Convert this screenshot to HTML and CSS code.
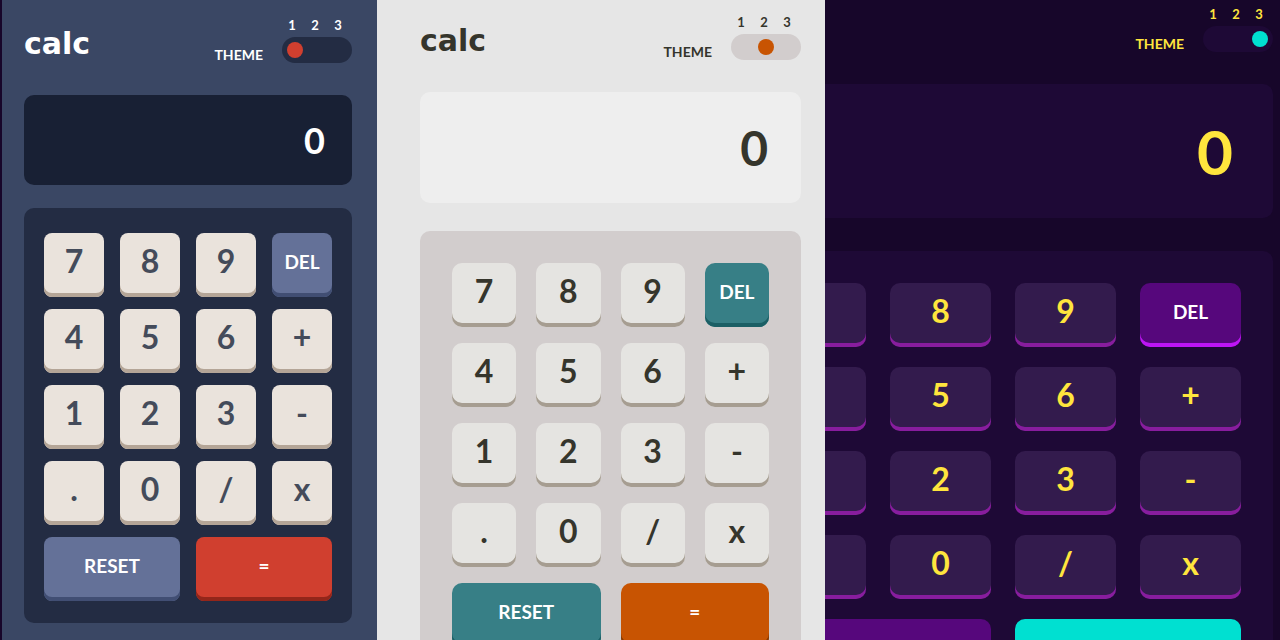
FILE: index.html
```html
<!DOCTYPE html>
<html lang="en">
<head>
<meta charset="utf-8">
<title>calc</title>
<link rel="stylesheet" href="styles.css">
</head>
<body>
<section class="panel t1">
  <div class="calc">
    <header class="head">
      <h1 class="logo">calc</h1>
      <div class="switch">
        <span class="switch-label">THEME</span>
        <div class="switch-ctl">
          <div class="nums"><span>1</span><span>2</span><span>3</span></div>
          <div class="track"><span class="knob"></span></div>
        </div>
      </div>
    </header>
    <div class="screen">0</div>
    <div class="keypad">
      <button class="key">7</button><button class="key">8</button><button class="key">9</button><button class="key fn sm">DEL</button>
      <button class="key">4</button><button class="key">5</button><button class="key">6</button><button class="key">+</button>
      <button class="key">1</button><button class="key">2</button><button class="key">3</button><button class="key">-</button>
      <button class="key">.</button><button class="key">0</button><button class="key">/</button><button class="key">x</button>
      <button class="key fn sm wide">RESET</button><button class="key eq sm wide">=</button>
    </div>
  </div>
</section>
<section class="panel t2">
  <div class="calc">
    <header class="head">
      <h1 class="logo">calc</h1>
      <div class="switch">
        <span class="switch-label">THEME</span>
        <div class="switch-ctl">
          <div class="nums"><span>1</span><span>2</span><span>3</span></div>
          <div class="track"><span class="knob"></span></div>
        </div>
      </div>
    </header>
    <div class="screen">0</div>
    <div class="keypad">
      <button class="key">7</button><button class="key">8</button><button class="key">9</button><button class="key fn sm">DEL</button>
      <button class="key">4</button><button class="key">5</button><button class="key">6</button><button class="key">+</button>
      <button class="key">1</button><button class="key">2</button><button class="key">3</button><button class="key">-</button>
      <button class="key">.</button><button class="key">0</button><button class="key">/</button><button class="key">x</button>
      <button class="key fn sm wide">RESET</button><button class="key eq sm wide">=</button>
    </div>
  </div>
</section>
<section class="panel t3">
  <div class="calc">
    <header class="head">
      <h1 class="logo">calc</h1>
      <div class="switch">
        <span class="switch-label">THEME</span>
        <div class="switch-ctl">
          <div class="nums"><span>1</span><span>2</span><span>3</span></div>
          <div class="track"><span class="knob"></span></div>
        </div>
      </div>
    </header>
    <div class="screen">0</div>
    <div class="keypad">
      <button class="key">7</button><button class="key">8</button><button class="key">9</button><button class="key fn sm">DEL</button>
      <button class="key">4</button><button class="key">5</button><button class="key">6</button><button class="key">+</button>
      <button class="key">1</button><button class="key">2</button><button class="key">3</button><button class="key">-</button>
      <button class="key">.</button><button class="key">0</button><button class="key">/</button><button class="key">x</button>
      <button class="key fn sm wide">RESET</button><button class="key eq sm wide">=</button>
    </div>
  </div>
</section>
</body>
</html>
```
FILE: styles.css
```css
* { box-sizing: border-box; margin: 0; padding: 0; }
html, body { width: 1280px; height: 640px; overflow: hidden; }
body {
  background: #17062a;
  font-family: "Lato", "Liberation Sans", sans-serif;
  font-weight: 700;
  display: flex;
  padding-left: 2px;
}
.panel { height: 640px; overflow: hidden; display: flex; flex-shrink: 0; }
.t1 { width: 375px; background: #3a4764; padding-left: 22px; }
.t2 { width: 448px; background: #e6e6e6; padding-left: 43px; }
.t3 { width: 455px; background: #17062a; justify-content: flex-end; padding-right: 7px; }

.calc { flex: 0 0 auto; }
.t1 .calc { width: 328px; padding-top: 19px; }
.t2 .calc { width: 381px; padding-top: 16px; }
.t3 .calc { width: 540px; padding-top: 8px; }

.head { display: flex; justify-content: space-between; align-items: flex-end; }
.logo {
  font-family: "DejaVu Sans", sans-serif;
  font-weight: 700;
  font-size: 30px;
  line-height: 30px;
  margin-bottom: 4px;
}
.switch { display: flex; align-items: flex-end; }
.switch-label { font-size: 14px; line-height: 14px; margin-bottom: 1.5px; margin-right: 19px; }
.nums {
  display: grid;
  grid-template-columns: repeat(3, 23px);
  margin-left: -1.5px;
  font-size: 13px;
  line-height: 13px;
  margin-bottom: 5px;
  text-align: center;
}
.track { width: 70px; height: 26px; border-radius: 13px; position: relative; }
.knob { position: absolute; top: 5px; width: 16px; height: 16px; border-radius: 50%; }
.t1 .knob { left: 5px; }
.t2 .knob { left: 27px; }
.t3 .knob { left: 49px; }

.screen {
  display: flex;
  align-items: center;
  justify-content: flex-end;
  border-radius: 10px;
  margin-top: 32px;
  line-height: 1;
}
.t1 .screen { height: 90px; padding-right: 27px; font-size: 36px; }
.t2 .screen { height: 111px; padding-right: 33px; font-size: 48px; }
.t3 .screen { height: 134px; padding-right: 40px; font-size: 62px; }

.keypad {
  display: grid;
  grid-template-columns: repeat(4, 1fr);
  grid-auto-rows: 64px;
  border-radius: 10px;
}
.t1 .keypad { margin-top: 23px; padding: 25px 20px 22px; column-gap: 16px; row-gap: 12px; }
.t2 .keypad { margin-top: 28px; padding: 32px; column-gap: 20px; row-gap: 16px; }
.t3 .keypad { margin-top: 33px; padding: 32px; column-gap: 24px; row-gap: 20px; }

.key {
  height: 64px;
  border: none;
  border-radius: 8px;
  font-family: inherit;
  font-weight: 700;
  font-size: 32px;
  line-height: 1;
  padding-bottom: 8px;
  display: flex;
  align-items: center;
  justify-content: center;
}
.t2 .key, .t3 .key { border-radius: 10px; }
.key.sm { font-size: 19px; }
.key.wide { grid-column: span 2; }

/* theme 1 */
.t1 .logo, .t1 .switch, .t1 .screen { color: #ffffff; }
.t1 .track, .t1 .keypad { background: #232c43; }
.t1 .knob { background: #d03f2f; }
.t1 .screen { background: #182034; }
.t1 .key { background: #eae3dc; color: #444b5a; box-shadow: inset 0 -4px 0 #b4a597; }
.t1 .key.fn { background: #647198; color: #ffffff; box-shadow: inset 0 -4px 0 #414e73; }
.t1 .key.eq { background: #d03f2f; color: #ffffff; box-shadow: inset 0 -4px 0 #93261a; }

/* theme 2 */
.t2 .logo, .t2 .switch, .t2 .screen { color: #35352c; }
.t2 .track, .t2 .keypad { background: #d2cdcd; }
.t2 .knob { background: #c85402; }
.t2 .screen { background: #eeeeee; }
.t2 .key { background: #e5e4e1; color: #35352c; box-shadow: inset 0 -4px 0 #a69d91; }
.t2 .key.fn { background: #377f86; color: #ffffff; box-shadow: inset 0 -4px 0 #1b5f65; }
.t2 .key.eq { background: #c85402; color: #ffffff; box-shadow: inset 0 -4px 0 #873901; }

/* theme 3 */
.t3 .logo, .t3 .switch, .t3 .screen { color: #ffe53d; }
.t3 .track, .t3 .keypad, .t3 .screen { background: #1e0936; }
.t3 .knob { background: #00e0d1; }
.t3 .key { background: #331b4d; color: #ffe53d; box-shadow: inset 0 -4px 0 #881d9e; }
.t3 .key.fn { background: #56077c; color: #ffffff; box-shadow: inset 0 -4px 0 #bd15f4; }
.t3 .key.eq { background: #00e0d1; color: #1a2327; box-shadow: inset 0 -4px 0 #6cf9f2; }
```
